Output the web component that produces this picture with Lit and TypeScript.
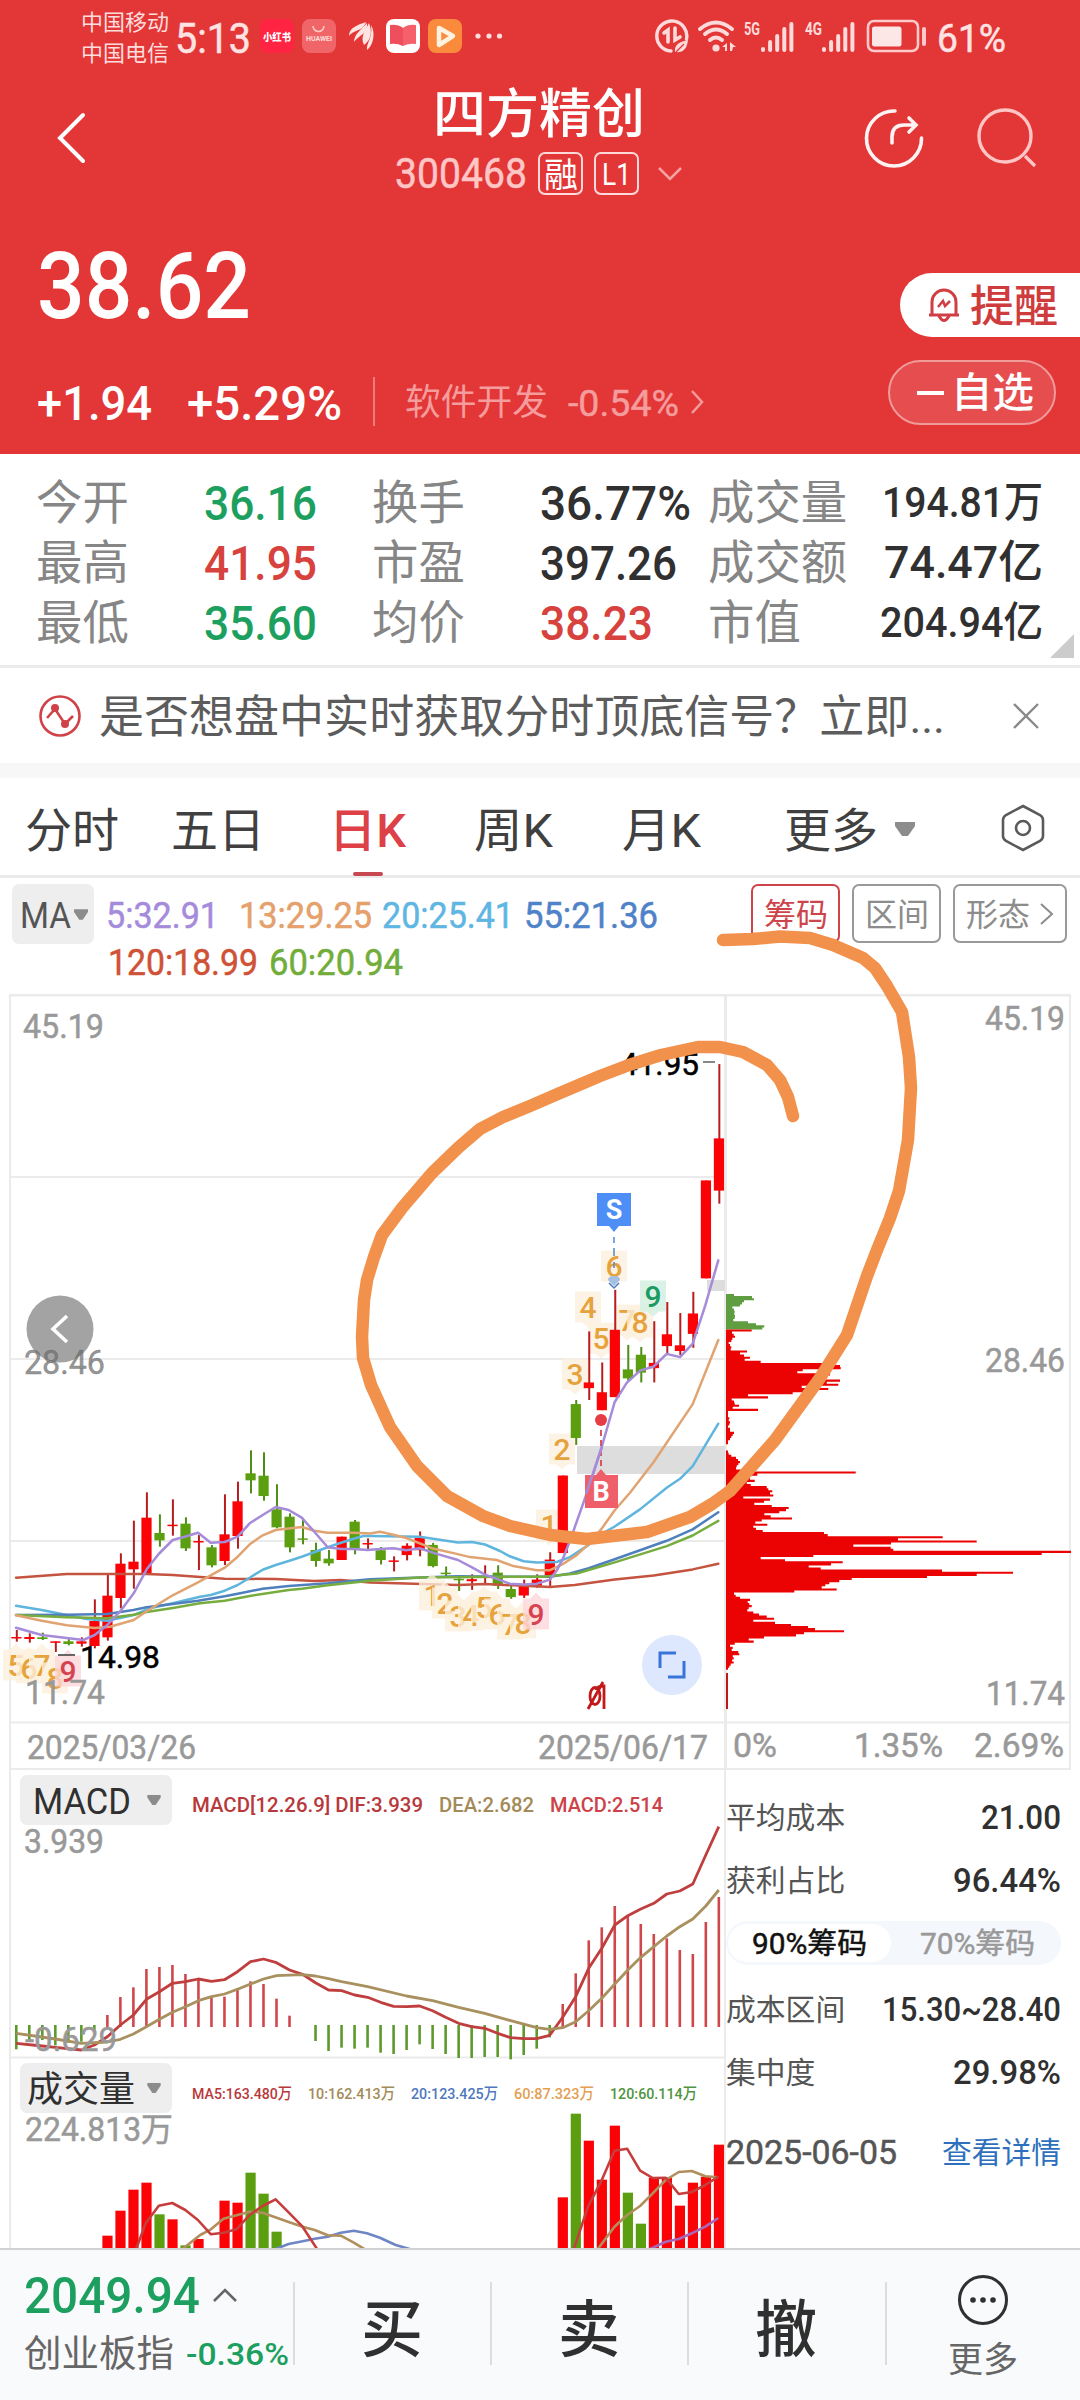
import { LitElement, html, svg, css } from "lit";
import { customElement } from "lit/decorators.js";

type Pt = [number, number];

const RED = "#d7423e";
const GREEN = "#1d9f60";
const DARK = "#303030";
const GREY = "#999";

/** Regular-weight figures get a hairline stroke so they read a touch heavier than the labels. */
const hair = (text: string, weight: number) => (weight === 400 && /^[\d:.,%/+\-]+/.test(text) ? 0.5 : 0);

/** One line of text stretched to a fixed width. */
const t = (text: string, w: number, size: number, fill: string, weight = 500) => {
  const h = Math.round(size * 1.2);
  return html`<svg class="t" width=${w} height=${h} viewBox="0 0 ${w} ${h}">
    <text x="0" y=${h / 2 + size * 0.365} font-size=${size} font-weight=${weight} fill=${fill} stroke=${fill} stroke-width=${hair(text, weight)}
      textLength=${w} lengthAdjust="spacingAndGlyphs">${text}</text></svg>`;
};

/** Text at a baseline on a chart canvas. */
const ct = (text: string, x: number, y: number, w: number, size: number, fill: string, weight = 400) =>
  svg`<text x=${x} y=${y} font-size=${size} font-weight=${weight} fill=${fill} stroke=${fill} stroke-width=${hair(text, weight)} textLength=${w} lengthAdjust="spacingAndGlyphs">${text}</text>`;

const X = (i: number) => 16.3 + 13.01 * i;
const ya = (v: number) => 1300 + v / 3;
const yb = (v: number) => 1100 + v / 2.45;

/* high, body top, body bottom, low, rising */
const early: [number, number, number, number, number][] = [
  [990, 1011, 1015, 1025, 1], [1000, 1011, 1017, 1028, 1], [998, 1012, 1017, 1020, 0], [1024, 1024, 1027, 1056, 1],
  [1015, 1024, 1032, 1036, 0], [1012, 1024, 1031, 1040, 1], [898, 963, 1038, 1045, 1], [825, 887, 1012, 1022, 1],
  [760, 791, 894, 925, 1], [662, 785, 808, 866, 1], [577, 653, 820, 824, 1], [643, 699, 721, 740, 0],
  [598, 674, 677, 707, 1], [652, 671, 745, 753, 0], [705, 723, 727, 810, 1], [735, 742, 796, 802, 0],
  [583, 703, 783, 795, 1], [545, 604, 708, 746, 1], [451, 520, 541, 580, 0], [457, 527, 588, 602, 0],
  [553, 628, 682, 685, 0], [640, 650, 742, 757, 0], [655, 715, 719, 733, 0], [728, 750, 783, 800, 0],
  [750, 776, 790, 797, 0], [710, 710, 780, 780, 1], [660, 665, 745, 763, 0], [715, 729, 732, 753, 1],
];
const late: [number, number, number, number, number][] = [
  [1095, 1103, 1127, 1138, 0], [1118, 1128, 1131, 1155, 1], [1086, 1092, 1115, 1128, 1], [1057, 1073, 1103, 1118, 1],
  [1085, 1090, 1142, 1145, 0], [1143, 1158, 1161, 1168, 0], [1172, 1173, 1176, 1203, 0], [1162, 1174, 1179, 1200, 1],
  [1140, 1166, 1169, 1185, 1], [1140, 1158, 1190, 1198, 0], [1190, 1198, 1218, 1222, 0], [1175, 1190, 1214, 1220, 1],
  [1162, 1175, 1190, 1195, 1], [1108, 1126, 1165, 1195, 1], [920, 920, 1110, 1110, 1], [735, 745, 828, 845, 0],
  [567, 692, 706, 735, 1], [643, 716, 760, 760, 1], [465, 563, 728, 728, 1], [600, 660, 682, 690, 0],
  [605, 624, 668, 692, 0], [542, 644, 657, 692, 1], [495, 574, 603, 625, 1], [522, 601, 615, 625, 1],
  [470, 523, 573, 607, 1], [197, 197, 437, 437, 1], [-88, 94, 222, 254, 1],
];
const candles = [
  ...early.map((c) => [ya(c[0]), ya(c[1]), ya(c[2]), ya(c[3]), c[4]]),
  ...late.map((c) => [yb(c[0]), yb(c[1]), yb(c[2]), yb(c[3]), c[4]]),
];

const join = (a: Pt[], b: Pt[]) =>
  [...a.map(([x, y]) => [x / 3, ya(y)]), ...b.map(([x, y]) => [370 + x / 3, yb(y)])]
    .map(([x, y]) => `${x.toFixed(1)},${y.toFixed(1)}`).join(" ");

const averages = [
  { c: "#c4533f", p: join([[48, 833], [200, 822], [440, 822], [518, 825], [674, 836], [827, 837], [943, 843], [1023, 840]],
    [[0, 1182], [264, 1188], [345, 1186], [540, 1193], [614, 1188], [734, 1175], [851, 1165], [968, 1150], [1045, 1136]]) },
  { c: "#5fb5dd", p: join([[48, 917], [125, 930], [200, 945], [260, 957], [322, 962], [401, 945], [450, 925], [518, 910], [600, 890], [632, 885], [674, 872], [713, 855], [749, 833], [788, 809], [827, 795], [866, 783], [905, 770], [983, 742], [1023, 728], [1061, 716], [1090, 708]],
    [[0, 1068], [149, 1070], [264, 1084], [306, 1083], [345, 1089], [390, 1105], [419, 1118], [461, 1130], [500, 1133], [560, 1132], [600, 1120], [656, 1090], [695, 1063], [734, 1045], [810, 1003], [890, 950], [930, 928], [968, 897], [1045, 793]]) },
  { c: "#4f80bd", p: join([[48, 945], [200, 944], [322, 942], [400, 930], [440, 922], [518, 912], [594, 902], [674, 889], [713, 881], [788, 866], [866, 858], [983, 850]],
    [[0, 1174], [150, 1170], [264, 1167], [400, 1168], [540, 1168], [600, 1160], [656, 1147], [734, 1125], [890, 1080], [968, 1052], [1045, 1010]]) },
  { c: "#77ad3f", p: join([[48, 945], [200, 952], [322, 955], [401, 944], [440, 936], [518, 924], [600, 910], [674, 902], [749, 888], [866, 870], [905, 866], [983, 856]],
    [[0, 1178], [150, 1170], [400, 1168], [520, 1168], [620, 1160], [734, 1133], [890, 1093], [968, 1067], [1045, 1031]]) },
  { c: "#e0a472", p: join([[48, 946], [125, 962], [200, 976], [284, 984], [330, 980], [401, 960], [440, 934], [518, 886], [594, 847], [632, 826], [674, 803], [713, 770], [749, 733], [788, 706], [827, 690], [905, 681], [943, 692], [983, 698], [1061, 698]],
    [[0, 1062], [30, 1058], [70, 1065], [109, 1073], [185, 1098], [260, 1112], [300, 1120], [380, 1127], [430, 1142], [500, 1152], [540, 1152], [578, 1137], [620, 1115], [656, 1088], [695, 1050], [734, 1005], [780, 962], [851, 887], [968, 745], [1045, 588]]) },
  { c: "#a58bd8", p: join([[48, 983], [125, 1005], [250, 1020], [284, 1005], [322, 975], [362, 932], [401, 880], [440, 808], [476, 762], [518, 720], [554, 710], [594, 698], [632, 728], [674, 726], [713, 710], [749, 670], [788, 645], [827, 621], [866, 630], [905, 653], [943, 695], [983, 742], [1023, 747], [1061, 747], [1103, 750]],
    [[29, 1100], [70, 1098], [109, 1103], [149, 1098], [200, 1112], [264, 1127], [306, 1145], [345, 1163], [380, 1173], [419, 1185], [461, 1187], [500, 1185], [540, 1175], [560, 1153], [578, 1125], [600, 1080], [614, 1047], [656, 950], [695, 850], [734, 740], [770, 693], [810, 663], [851, 653], [890, 622], [930, 630], [968, 597], [1006, 503], [1045, 393]]) },
];

/* Nine-turn counters: digit, centre x, centre y, tone */
const counts: [string, number, number, string][] = [
  ["5", 16, 1665, "o"], ["6", 29, 1668, "o"], ["7", 42, 1665, "o"], ["8", 55, 1678, "o"], ["9", 68, 1671, "r"],
  ["1", 432, 1595, "o"], ["2", 445, 1603, "o"], ["3", 458, 1616, "o"], ["4", 471, 1615, "o"], ["5", 484, 1607, "o"],
  ["6", 497, 1614, "o"], ["7", 510, 1624, "o"], ["8", 523, 1623, "o"], ["9", 536, 1614, "r"],
  ["1", 549, 1525, "o"], ["2", 562, 1449, "o"], ["3", 575, 1374, "o"], ["4", 588, 1307, "o"], ["5", 601, 1338, "o"],
  ["6", 614, 1266, "o"], ["7", 627, 1320, "o"], ["8", 640, 1322, "o"], ["9", 653, 1296, "g"],
];
const tones: Record<string, [string, string]> = {
  o: ["#fdf0de", "#e6a23c"], r: ["#fcd6da", "#d64350"], g: ["#d0eedf", "#1b9b62"],
};
const badge = ([d, x, y, k]: [string, number, number, string]) => svg`
  <path d="M${x - 13} ${y - 15.5}h26v31h-26z${y > 1590 ? `M${x - 6} ${y - 15.5}l6 -6 6 6z` : `M${x - 6} ${y + 15.5}l6 5 6 -5z`}" fill=${tones[k][0]} fill-opacity=".78"/>
  <text x=${x} y=${y + 10.5} font-size="30" font-weight="500" text-anchor="middle" fill=${tones[k][1]}>${d}</text>`;

/* Chip distribution: evenly spaced rows from the top, value = bar end */
const chipRows = [42, 96, 102, 72, 66, 60, 37, 42, 44, 43, 45, 44, 40, 84, 108, 133, 127,
  95, 36, 41, 45, 37, 34, 26, 30, 34, 32, 81, 60, 72, 90, 74, 122, 310, 360, 362, 248, 232, 330, 318, 318, 360, 320, 355, 245,
  325, 250, 218, 84, 144, 35, 42, 44, 57, 38, 114, 24, 24, 24, 28, 26, 30, 28, 24, 30, 30, 42, 38, 34, 30, 24, 24, 18, 18,
  18, 24, 26, 34, 48, 54, 60, 55, 50, 48, 66, 407, 112, 80, 90, 104, 80, 92, 140, 145, 157, 150, 160, 70, 150, 132, 103, 155, 206,
  198, 178, 133, 152, 216, 125, 106, 142, 100, 108, 128, 312, 323, 668, 534, 770, 513, 400, 512, 520, 1053, 965, 280, 122,
  195, 368, 333, 266, 302, 666, 879, 770, 621, 395, 358, 328, 316, 305, 350, 223, 42, 47, 60, 90, 83, 88, 95, 86, 82, 100,
  117, 140, 162, 100, 165, 213, 264, 285, 372, 252, 228, 132, 86, 101, 44, 30, 38, 35, 55, 58, 38, 41, 36, 41, 32, 28, 24];
const chipPath = (from: number, to: number) => {
  const y = (k: number) => (1294 + k * 2.088).toFixed(2);
  let d = `M726 ${y(from)}`;
  for (let k = from; k < to; k++) d += `H${(720 + chipRows[k] / 3).toFixed(1)}V${y(k + 1)}`;
  return d + "H726Z";
};

const yc = (v: number) => 1760 + v / 3;
const hist: (number | null)[] = [868, 840, 840, 856, 848, 845, 812, 765, 711, 682, 627, 621, 615, 642, 660, 708, 710, 685, 664, 672, 716, 767, null,
  843, 873, 863, 866, 863, 878, 882, 870, 853, 867, 882, 894, 894, 891, 891, 898, 885, 866, 832, 732, 640, 541, 502, 438, 468, 492, 522, 535, 570, 582, 486, 411];
const byIndex = (p: Pt[]) => p.map(([i, v]) => `${X(i).toFixed(1)},${yc(v).toFixed(1)}`).join(" ");
const byCanvas = (p: Pt[]) => p.map(([x, v]) => `${(x / 2.148).toFixed(1)},${yc(v).toFixed(1)}`).join(" ");
const dif = byIndex([[0, 850], [2, 858], [3, 862], [5, 870], [6, 855], [7, 830], [8, 795], [9, 765], [10, 718], [11, 695], [12, 670], [13, 665], [14, 657], [15, 664], [16, 659], [17, 635], [18, 605], [19, 597], [20, 608], [21, 630], [22, 643], [23, 668], [24, 690], [25, 692], [26, 705], [27, 712], [28, 727], [29, 739], [30, 740], [31, 738], [32, 752], [33, 772], [34, 790], [35, 800], [36, 805], [37, 820], [38, 833], [39, 836], [40, 836], [41, 826], [42, 772], [43, 710], [44, 625], [45, 565], [46, 495], [47, 467], [48, 447], [49, 430], [50, 402], [51, 393], [52, 372], [53, 285], [54, 200]]);
const dea = byIndex([[0, 820], [3, 837], [5, 850], [7, 846], [8, 838], [9, 822], [10, 800], [11, 778], [12, 757], [13, 740], [14, 722], [15, 710], [16, 702], [17, 688], [18, 672], [19, 657], [20, 647], [22, 644], [23, 648], [24, 656], [25, 665], [27, 680], [30, 708], [32, 722], [34, 742], [36, 760], [38, 782], [40, 803], [41, 808], [42, 803], [43, 785], [44, 752], [45, 715], [46, 672], [47, 630], [48, 592], [49, 560], [50, 528], [51, 500], [52, 477], [53, 438], [54, 390]]);

const volumes: [number, number, number][] = [[7, 1427, 1], [8, 1352, 1], [9, 1289, 1], [10, 1268, 1], [11, 1363, 0], [12, 1378, 1], [13, 1456, 0], [14, 1437, 1],
  [16, 1322, 1], [17, 1328, 1], [18, 1238, 0], [19, 1301, 0], [20, 1415, 0], [42, 1312, 1], [43, 1061, 0], [44, 1142, 1], [45, 1259, 1], [46, 1097, 1],
  [47, 1298, 0], [48, 1391, 0], [49, 1253, 1], [50, 1253, 1], [51, 1337, 1], [52, 1268, 1], [53, 1250, 1], [54, 1154, 1]];
const volumeLines = [
  { c: "#6f86c4", p: byCanvas([[592, 1467], [620, 1452], [650, 1444], [676, 1436], [704, 1430], [732, 1418], [760, 1412], [788, 1420], [816, 1433], [850, 1455], [885, 1469]]) },
  { c: "#a868b8", p: byCanvas([[1393, 1469], [1430, 1445], [1458, 1437], [1486, 1420], [1515, 1400], [1543, 1374]]) },
  { c: "#b08f5c", p: byCanvas([[390, 1469], [430, 1425], [453, 1408], [480, 1376], [508, 1366], [536, 1355], [564, 1358], [620, 1386], [650, 1400], [676, 1410], [704, 1426], [732, 1427], [760, 1448], [785, 1469]]) },
  { c: "#b08f5c", p: byCanvas([[1283, 1469], [1320, 1400], [1347, 1365], [1375, 1338], [1402, 1300], [1430, 1260], [1458, 1236], [1486, 1233], [1515, 1249], [1543, 1252]]) },
  { c: "#c53e3c", p: byCanvas([[292, 1469], [313, 1390], [341, 1337], [370, 1329], [398, 1350], [425, 1380], [453, 1423], [480, 1418], [508, 1408], [536, 1365], [564, 1338], [592, 1318], [620, 1357], [650, 1400], [682, 1469]]) },
  { c: "#c53e3c", p: byCanvas([[1232, 1469], [1263, 1340], [1291, 1265], [1320, 1172], [1347, 1166], [1375, 1232], [1402, 1254], [1430, 1253], [1458, 1302], [1486, 1296], [1515, 1275], [1543, 1250]]) },
];

const down = svg`<path d="M0 0h16v3l-6 9h-4l-6-9z" fill="#8c8c8c"/>`;

@customElement("app-root")
export class AppRoot extends LitElement {
  static styles = css`
    :host { display: block; width: 1080px; height: 2400px; overflow: hidden; background: #fff;
      font-family: Roboto, "Noto Sans CJK SC", sans-serif; position: relative; }
    * { box-sizing: border-box; }
    svg { display: block; flex: none; }
    .t { overflow: visible; }
    .row { display: flex; align-items: center; }
    .head { background: #e23637; height: 454px; }
    .status { height: 75px; padding-left: 81px; }
    .carriers { display: flex; flex-direction: column; gap: 5px; margin-right: 6px; padding-bottom: 1px; }
    .status .left { margin-left: 8px; }
    .status .right { margin: 0 9px 0 150px; }
    .title { height: 127px; padding: 0 44px 0 54px; justify-content: space-between; }
    .names { display: flex; flex-direction: column; align-items: center; gap: 2px; padding-left: 126px; padding-top: 3px; }
    .code { gap: 11px; }
    .tag { width: 45px; height: 43px; border: 2px solid #ffd9d9; border-radius: 7px; display: grid; place-items: center; }
    .actions { gap: 51px; }
    .price { height: 150px; justify-content: space-between; align-items: flex-start; padding-left: 37px; }
    .price > .t { margin-top: 26px; }
    .alert { margin-top: 71px; width: 180px; height: 64px; background: #fff; border-radius: 32px 0 0 32px; padding-left: 26px; gap: 8px; }
    .change { height: 102px; align-items: flex-start; padding-left: 37px; }
    .figures { height: 99px; }
    .rule { width: 2px; height: 49px; background: #f07b7b; margin: 0 30px 0 31px; }
    .fav { margin: 8px 0 0 183px; width: 168px; height: 65px; border: 2px solid #f19a9a; background: #e54d4e; border-radius: 33px; gap: 6px; padding-left: 27px; }
    .stats { height: 211px; display: grid; grid-template: repeat(3, 60px) / 168px 168px 168px 168px 335px; padding: 18px 0 0 36px; align-items: center; }
    .stats .last { display: flex; justify-content: space-between; align-items: center; }
    .corner { margin: -31px 6px 0 1050px; }
    .notice { height: 98px; border-top: 3px solid #ebebeb; padding: 0 41px 0 39px; }
    .notice .t { margin: 2px 68px 0 18px; }
    .band { height: 15px; background: #f7f7f8; }
    .tabs { height: 100px; border-bottom: 3px solid #ebebeb; padding: 5px 0 0 25px; }
    .tab { height: 94px; display: flex; flex-direction: column; justify-content: flex-end; align-items: center; }
    .tab .t { margin-bottom: 14px; }
    .tab i { width: 30px; height: 4px; border-radius: 2px; }
    .tab.on i { background: #c9474f; }
    .ma { height: 116px; padding: 6px 0 0 12px; display: flex; align-items: flex-start; }
    .pick { background: #eee; border-radius: 7px; display: flex; align-items: center; }
    .pick.m { width: 82px; height: 60px; padding-left: 8px; gap: 3px; }
    .values { margin: 9px 0 0 12px; width: 645px; display: flex; flex-direction: column; gap: 4px; }
    .values .row { gap: 10px; }
    .values .two { gap: 11px; padding-left: 2px; }
    .chips { gap: 12px; }
    .chip { height: 59px; width: 89px; border: 2px solid #999; border-radius: 7px; display: flex; align-items: center; justify-content: center; gap: 10px; }
    .chip.on { border-color: #cd454b; }
    .chip.wide { width: 114px; }
    .lower { display: grid; grid-template-columns: 726px 335px; height: 478px; }
    .panes { display: grid; grid-template-rows: 286px 192px; }
    .layer { grid-area: 1 / 1 / 3 / 2; }
    .pane1, .pane2 { z-index: 1; display: flex; align-items: flex-start; padding-left: 20px; }
    .pane1 { grid-area: 1 / 1; padding-top: 5px; }
    .pane2 { grid-area: 2 / 1; padding-top: 7px; }
    .pick.p { width: 152px; height: 50px; justify-content: space-between; padding: 0 11px 0 13px; }
    .pick.v { padding-left: 7px; }
    .legend { margin-left: 20px; gap: 16px; height: 60px; }
    .pane1 .legend { height: 59px; }
    .side { display: flex; flex-direction: column; padding-top: 15px; }
    .side .row { height: 63px; justify-content: space-between; }
    .side .switch { height: 44px; margin: 10px 0 12px; background: #f4f7fb; border-radius: 22px; padding-right: 26px; }
    .switch .on { width: 163px; height: 38px; margin-left: 2px; background: #fff; border-radius: 19px; display: grid; place-items: center; }
    .side .date { margin-top: 17px; }
    .foot { height: 152px; border-top: 2px solid #d2d2d4; background: #f9fafc; display: grid; grid-template-columns: 293px 197px 197px 198px 195px; }
    .cell { display: grid; place-items: center; }
    .cell, .foot .more { background: linear-gradient(#dcdde0, #dcdde0) 0 32px / 2px 83px no-repeat; }
    .cell { padding-top: 8px; }
    .index { display: flex; flex-direction: column; padding: 15px 0 0 24px; gap: 6px; }
    .index .row { gap: 12px; }
    .more { display: flex; flex-direction: column; align-items: center; padding-top: 24px; gap: 12px; }
    .ink { position: absolute; left: 0; top: 920px; pointer-events: none; z-index: 3; }
  `;

  private statusBar() {
    const bars = (x: number) => svg`<g stroke="#ffdada" stroke-width="4" stroke-linecap="round">
      ${[4, 11, 17, 24, 29].map((h, i) => svg`<path d="M${x + i * 7.1} 50V${53 - h}"/>`)}</g>`;
    return html`<div class="row status">
      <div class="carriers">${t("中国移动", 88, 22, "#ffdcdc", 400)}${t("中国电信", 88, 22, "#ffdcdc", 400)}</div>
      ${t("5:13", 76, 42, "#ffe2e2", 400)}
      <svg class="left" width="246" height="75" viewBox="259 0 246 75">
        <rect x="260" y="19" width="34" height="34" rx="8" fill="#ff2442"/>
        ${ct("小红书", 263, 41, 28, 10.5, "#fff", 900)}
        <rect x="302" y="19" width="34" height="34" rx="8" fill="#f06568"/>
        <path d="M313 26a5.5 5.5 0 0 0 11 0" fill="none" stroke="#ffc9c6" stroke-width="1.6"/>
        ${ct("HUAWEI", 306, 41, 26, 6.5, "#ffdcd8", 700)}
        <g fill="#ffe4e2"><path d="M349 36c0-8 8-11 17-14-2 7-8 8-12 10-2 1-4 2-5 4z"/><path d="M354 42c0-8 7-12 13-19 1 8-4 11-8 14-2 2-4 3-5 5z"/><path d="M364 45c-4-8 1-14 5-22 3 8 3 16-5 22z"/><path d="M367 50c-1-7 6-12 4-25 5 8 2 21-4 25z"/></g>
        <rect x="386" y="19" width="34" height="34" rx="8" fill="#fff"/>
        <path d="M390 25q8-1 13 3v18q-6-3-13-2z" fill="#ef4f5c"/><path d="M416 25q-8-1-13 3v18q6-3 13-2z" fill="#f5606b"/>
        <rect x="428" y="19" width="34" height="34" rx="8" fill="#fa8a3c"/>
        <path d="M439 28l14 8-14 9z" fill="none" stroke="#fff3df" stroke-width="4.500" stroke-linejoin="round"/>
        <g fill="#ffdede"><circle cx="478" cy="36" r="2.600"/><circle cx="489" cy="36" r="2.600"/><circle cx="499.500" cy="36" r="2.600"/></g>
      </svg>
      <svg class="right" width="273" height="75" viewBox="655 0 273 75">
        <g fill="none" stroke="#ffdada" stroke-width="3.400" stroke-linecap="round">
          <path d="M671 51a15 15 0 1 1 15.500-12"/>
          <path d="M664 33l4-3v12M675 28v12l5-3" stroke-width="3.600"/>
          <path d="M700 29q16-13 32 0M705 34q11-9 22 0M710 40q6-5 12 0" stroke-width="4"/>
        </g>
        <path d="M675 52c-1-8 5-10 13-12-1 9-5 13-13 12z" fill="#ffdada"/><path d="M676 52l8-8" stroke="#e23637" stroke-width="1.300"/>
        <circle cx="716" cy="48" r="3.600" fill="#ffdada"/>
        <path d="M722 47l5-4v8h-2v-4zM730 42l6 5h-3l-1 4h-2z" fill="#ffdada"/>
        ${ct("5G", 744, 35, 16, 19, "#ffdada", 700)}${bars(763)}
        ${ct("4G", 805, 35, 17, 19, "#ffdada", 700)}${bars(824)}
        <rect x="868" y="21" width="50" height="30" rx="6" fill="none" stroke="#ffc9c9" stroke-width="2.600"/>
        <rect x="872" y="26.500" width="29.500" height="20" rx="2.500" fill="#fde6e6"/>
        <path d="M924 29v15" stroke="#ffc9c9" stroke-width="4" stroke-linecap="round"/>
      </svg>
      ${t("61%", 69, 38, "#ffe2e2", 400)}
    </div>`;
  }

  private header() {
    return html`<div class="head">
      ${this.statusBar()}
      <div class="row title">
        <svg width="34" height="54" viewBox="0 0 34 54"><path d="M29 3L6 26l23 23" fill="none" stroke="#fff" stroke-width="4" stroke-linecap="round"/></svg>
        <div class="names">
          ${t("四方精创", 212, 53, "#fff", 500)}
          <div class="row code">
            ${t("300468", 132, 42, "#ffc6c6", 400)}
            <div class="tag">${t("融", 34, 34, "#fff", 400)}</div>
            <div class="tag">${t("L1", 29, 31, "#fff", 400)}</div>
            <svg width="32" height="20" viewBox="0 0 32 20"><path d="M9 5l11 11L31 5" fill="none" stroke="#f5a3a3" stroke-width="2.500"/></svg>
          </div>
        </div>
        <div class="row actions">
          <svg width="62" height="62" viewBox="0 1 62 62" fill="none" stroke="#fff2f2" stroke-width="3.600" stroke-linecap="round">
            <path d="M32 4A27.500 27.500 0 1 0 58.500 31M29 36v-6q0-12 12-12h11M46 11l7 7-7 7"/></svg>
          <svg width="60" height="62" viewBox="0 0 60 62" fill="none" stroke="#ffc4c4" stroke-width="3.400"><circle cx="29" cy="28" r="26"/><path d="M49 48l10 10"/></svg>
        </div>
      </div>
      <div class="row price">
        ${t("38.62", 214, 93, "#fff", 500)}
        <div class="row alert">
          <svg width="36" height="38" viewBox="0 0 36 38" fill="none" stroke="#cf3f43" stroke-width="3"><path d="M3 29h30M6 29V16a12 12 0 0 1 24 0v13M13 30q5 9 10 0"/><path d="M12 21l5-6 2 5 5-5" stroke-width="2.500"/></svg>
          ${t("提醒", 88, 44, "#cf3c3e", 500)}
        </div>
      </div>
      <div class="row change">
        <div class="row figures">
          ${t("+1.94", 115, 48, "#fff", 500)}<span style="width:35px"></span>${t("+5.29%", 155, 48, "#fff", 500)}
          <div class="rule"></div>
          ${t("软件开发", 143, 36, "#f59c9c", 400)}<span style="width:20px"></span>${t("-0.54%", 111, 37, "#f59c9c", 400)}
          <svg width="26" height="30" viewBox="0 0 26 30"><path d="M13 4l10 11-10 11" fill="none" stroke="#f59c9c" stroke-width="2.500"/></svg>
        </div>
        <div class="row fav"><svg width="28" height="6" viewBox="0 0 28 6"><path d="M0 3h27" stroke="#fff" stroke-width="4"/></svg>${t("自选", 83, 41, "#fff", 500)}</div>
      </div>
    </div>`;
  }

  private stats() {
    const L = (s: string) => t(s, s.length * 46.4, 46.4, "#868686", 400);
    const V = (s: string, w: number, c: string) => t(s, w, 48, c, 500);
    return html`<div class="stats">
      ${L("今开")}${V("36.16", 113, GREEN)}${L("换手")}${V("36.77%", 151, DARK)}<div class="last">${L("成交量")}${t("194.81万", 161, 42, DARK)}</div>
      ${L("最高")}${V("41.95", 113, RED)}${L("市盈")}${V("397.26", 137, DARK)}<div class="last">${L("成交额")}${t("74.47亿", 159, 45, DARK)}</div>
      ${L("最低")}${V("35.60", 113, GREEN)}${L("均价")}${V("38.23", 113, RED)}<div class="last">${L("市值")}${t("204.94亿", 163, 42, DARK)}</div>
    </div>
    <svg class="corner" width="24" height="31" viewBox="0 0 24 31"><path d="M24 0v24H0z" fill="#ccc"/></svg>
    <div class="row notice">
      <svg width="42" height="42" viewBox="0 0 42 42" fill="none" stroke="#cf4248" stroke-width="2.600"><circle cx="21" cy="21" r="19.500"/><path d="M8 23l8-9 10 15 8-8"/><g fill="#cf4248" stroke="none"><circle cx="16" cy="13" r="4"/><circle cx="26" cy="29" r="4"/></g></svg>
      ${t("是否想盘中实时获取分时顶底信号？立即...", 846, 45, "#5c5c5c", 400)}
      <svg width="26" height="26" viewBox="0 0 26 26"><path d="M1 1l24 24M25 1L1 25" stroke="#8a8a8a" stroke-width="2.400"/></svg>
    </div>
    <div class="band"></div>`;
  }

  private tabs() {
    const tab = (s: string, w: number, gap: number, on = false) =>
      html`<div class="tab ${on ? "on" : ""}">${t(s, w, 47, on ? "#de4047" : "#404040", on ? 500 : 400)}<i></i></div><span style="width:${gap}px"></span>`;
    return html`<div class="row tabs">
      ${tab("分时", 94, 52)}${tab("五日", 94, 64)}${tab("日K", 77, 68, true)}${tab("周K", 79, 69)}${tab("月K", 79, 83)}${tab("更多", 94, 17)}
      <svg width="20" height="14" viewBox="0 0 20 14"><path d="M0 0h20v4l-7 10H7L0 4z" fill="#8c8c8c"/></svg>
      <span style="width:86px"></span>
      <svg width="44" height="50" viewBox="0 0 44 50" fill="none" stroke="#5a5a5a" stroke-width="2.600"><path d="M22 2l17 9q3 2 3 5v16q0 3-3 5l-17 9-17-9q-3-2-3-5V16q0-3 3-5z"/><circle cx="22" cy="24" r="7"/></svg>
    </div>`;
  }

  private averagesRow() {
    return html`<div class="ma">
      <div class="pick m">${t("MA", 51, 36, "#555", 400)}<svg width="14" height="11" viewBox="0 0 16 12">${down}</svg></div>
      <div class="values">
        <div class="row">${t("5:32.91", 113, 36, "#a58bdb", 400)}<span></span>${t("13:29.25", 133, 36, "#e5a06c", 400)}${t("20:25.41", 132, 36, "#5fb6e3", 400)}${t("55:21.36", 134, 36, "#4f82c8", 400)}</div>
        <div class="row two">${t("120:18.99", 150, 36, "#cf5236", 400)}${t("60:20.94", 134, 36, "#72ad3b", 400)}</div>
      </div>
      <div class="row chips">
        <div class="chip on">${t("筹码", 64, 32, "#cd454b", 400)}</div>
        <div class="chip">${t("区间", 64, 32, "#8c8c8c", 400)}</div>
        <div class="chip wide">${t("形态", 64, 32, "#8c8c8c", 400)}<svg width="14" height="24" viewBox="0 0 14 24"><path d="M1 2l11 10L1 22" fill="none" stroke="#8c8c8c" stroke-width="2"/></svg></div>
      </div>
    </div>`;
  }

  private kline() {
    return html`<svg width="1080" height="776" viewBox="0 994 1080 776">
      <g stroke="#ebebeb" stroke-width="2" fill="none">
        <path d="M9 995H1071" stroke-width="3"/><path d="M10 994V1770M1070 994V1770M10 1177H724M10 1359H724M10 1541H724M10 1722.500H1070"/>
        <path d="M725.500 994V1770" stroke-width="3"/><path d="M10 1769H1070"/></g>
      <g fill="#ddd"><rect x="577" y="1446" width="148" height="28"/><rect x="707" y="1280" width="18" height="11"/></g>
      ${counts.filter((c) => c[2] < 1590).map(badge)}
      ${candles.map(([h, a, b, l, up], i) => svg`<path d="M${X(i) + 0.5} ${h}V${l}" stroke=${up ? "#b81c1c" : "#4f8c18"} stroke-width="2"/>
        <rect x=${X(i) - 5} y=${a} width="10.200" height=${Math.max(b - a, 1.5)} fill=${up ? "#fb0207" : "#5b9f10"}/>`)}
      ${averages.map((m) => svg`<polyline points=${m.p} fill="none" stroke=${m.c} stroke-width="2.500" stroke-linejoin="round" stroke-linecap="round"/>`)}
      ${counts.filter((c) => c[2] >= 1590).map(badge)}
      <path d="M614 1237v6M614 1248v8M614 1262v6" stroke="#5b8fce" stroke-width="1.600"/>
      <path d="M608 1280q0-4 6-4t6 4l-6 6z" fill="#a4bfe4"/><path d="M609 1283l5 5 5-5" fill="none" stroke="#4c7cc0" stroke-width="1.500"/>
      <path d="M597 1193h34v33h-12l-5 6-5-6h-12z" fill="#4d8ff7"/>
      <text x="614" y="1219" font-size="27" font-weight="700" text-anchor="middle" fill="#fff">S</text>
      <circle cx="601" cy="1420" r="6" fill="#e63c46"/><path d="M601 1430V1470" stroke="#d8464e" stroke-width="1.800" stroke-dasharray="6 4"/>
      <path d="M585 1475h11l5-6 5 6h12v33h-33z" fill="#ef5f6a"/>
      <path d="M586 1494L602 1447" stroke="#a58bd8" stroke-width="2.500"/>
      <text x="601" y="1501" font-size="27" font-weight="700" text-anchor="middle" fill="#fff">B</text>
      <path d=${chipPath(0, 17)} fill="#5f9e40"/><path d=${chipPath(17, chipRows.length)} fill="#eb0202"/>
      <path d="M727 1673V1709" stroke="#c01818" stroke-width="2"/>
      <circle cx="60" cy="1329" r="33.500" fill="#a3a3a3"/><path d="M67 1316l-14 13 14 13" fill="none" stroke="#fff" stroke-width="3.600"/>
      ${ct("45.19", 23, 1038, 81, 33, GREY)}${ct("28.46", 24, 1373.5, 81, 33, "rgba(110,110,110,.72)")}${ct("11.74", 25, 1704, 80, 33, GREY)}
      ${ct("14.98", 80, 1668, 80, 31, "#000")}<path d="M58 1655h17" stroke="#666" stroke-width="2"/>
      ${ct("41.95", 620, 1075, 79, 31, "#000")}<path d="M703 1062h12" stroke="#888" stroke-width="2"/>
      ${ct("2025/03/26", 27, 1759, 169, 33, GREY)}${ct("2025/06/17", 538, 1759, 170, 33, GREY)}
      ${ct("45.19", 985, 1029.5, 80, 33, GREY)}${ct("28.46", 985, 1372, 80, 33, GREY)}${ct("11.74", 986, 1705, 79, 33, GREY)}
      ${ct("0%", 733, 1757, 44, 33, GREY)}${ct("1.35%", 854, 1757, 89, 33, GREY)}${ct("2.69%", 974, 1757, 90, 33, GREY)}
      <circle cx="672" cy="1665" r="30" fill="#dde8fe"/>
      <path d="M660 1668v-15h16M668 1677h16v-16" fill="none" stroke="#3b74d8" stroke-width="3"/>
      <g fill="none" stroke="#c21a1a" stroke-width="2.800"><ellipse cx="595" cy="1696" rx="5" ry="8.500"/><path d="M588 1709l15-27M596 1690q1-4 8-4v23"/></g>
    </svg>`;
  }

  private lower() {
    const kv = (k: string, v: string, w: number) => html`<div class="row">${t(k, k.length * 29.8, 29.8, "#555", 400)}${t(v, w, 33.5, DARK, 500)}</div>`;
    return html`<div class="lower">
      <div class="panes">
        <svg class="layer" width="726" height="478" viewBox="0 1770 726 478">
          <path d="M10 1770V2248M725 1770V2248M10 2057.500H725" stroke="#ebebeb" stroke-width="2" fill="none"/>
          ${hist.map((v, i) => v === null ? "" : svg`<path d="M${X(i)} ${v < 800 ? 2027 : 2025}V${yc(v)}" stroke=${v < 800 ? "#d0474b" : "#5c9a2c"} stroke-width="2.600"/>`)}
          <polyline points=${dif} fill="none" stroke="#bf3e3e" stroke-width="2.800" stroke-linejoin="round"/>
          <polyline points=${dea} fill="none" stroke="#a8905f" stroke-width="2.800" stroke-linejoin="round"/>
          ${ct("3.939", 24, 1853, 80, 33, GREY)}${ct("-0.629", 25, 2051, 92, 33, GREY)}${ct("224.813万", 25, 2140.5, 148, 33, GREY)}
          ${volumes.map(([i, v, up]) => svg`<rect x=${X(i) - 5} y=${yc(v)} width="10.200" height=${2250 - yc(v)} fill=${up ? "#fb0207" : "#5b9f10"}/>`)}
          ${volumeLines.map((m) => svg`<polyline points=${m.p} fill="none" stroke=${m.c} stroke-width="2.600" stroke-linejoin="round"/>`)}
        </svg>
        <div class="pane1">
          <div class="pick p">${t("MACD", 98, 36, DARK, 400)}<svg width="14" height="10" viewBox="0 0 16 12">${down}</svg></div>
          <div class="row legend">${t("MACD[12.26.9] DIF:3.939", 231, 21, "#b8393c")}${t("DEA:2.682", 95, 21, "#a38a58")}${t("MACD:2.514", 113, 21, "#cd4248")}</div>
        </div>
        <div class="pane2">
          <div class="pick p v">${t("成交量", 108, 36, DARK, 400)}<svg width="14" height="10" viewBox="0 0 16 12">${down}</svg></div>
          <div class="row legend">${t("MA5:163.480万", 100, 15.5, "#b8393c")}${t("10:162.413万", 87, 15.5, "#a38a58")}${t("20:123.425万", 87, 15.5, "#4f78c0")}${t("60:87.323万", 80, 15.5, "#e2a052")}${t("120:60.114万", 87, 15.5, "#4f9440")}</div>
        </div>
      </div>
      <div class="side">
        ${kv("平均成本", "21.00", 80)}${kv("获利占比", "96.44%", 108)}
        <div class="row switch"><div class="on">${t("90%筹码", 115, 29, "#111", 400)}</div>${t("70%筹码", 115, 29, GREY, 400)}</div>
        ${kv("成本区间", "15.30~28.40", 179)}${kv("集中度", "29.98%", 108)}
        <div class="row date">${t("2025-06-05", 171, 33, "#555", 400)}${t("查看详情", 119, 29.8, "#2e70bd", 400)}</div>
      </div>
    </div>`;
  }

  private footer() {
    const cell = (s: string) => html`<div class="cell">${t(s, 62, 62, DARK, 500)}</div>`;
    return html`<div class="foot">
      <div class="index">
        <div class="row">${t("2049.94", 176, 50, GREEN)}<svg width="26" height="16" viewBox="0 0 26 16"><path d="M2 14L13 3l11 11" fill="none" stroke="#666" stroke-width="2.600"/></svg></div>
        <div class="row">${t("创业板指", 150, 37, "#666", 400)}${t("-0.36%", 103, 32, GREEN)}</div>
      </div>
      ${cell("买")}${cell("卖")}${cell("撤")}
      <div class="more">
        <svg width="52" height="52" viewBox="0 0 52 52"><circle cx="26" cy="26" r="23.500" fill="none" stroke="#303030" stroke-width="3"/><g fill="#303030"><circle cx="16" cy="26" r="2.800"/><circle cx="26" cy="26" r="2.800"/><circle cx="36" cy="26" r="2.800"/></g></svg>
        ${t("更多", 70, 35, "#666", 400)}
      </div>
    </div>`;
  }

  render() {
    return html`${this.header()}${this.stats()}${this.tabs()}${this.averagesRow()}${this.kline()}${this.lower()}${this.footer()}
      <svg class="ink" width="1080" height="640" viewBox="0 920 1080 640">
        <polyline fill="none" stroke="#f2914b" stroke-width="12.500" stroke-linecap="round" stroke-linejoin="round"
          points="723,940 753,939 780,936.500 810,938 833,945 863,958 875,968 887,986 902,1012 909,1057 911,1088 908,1140 899,1191 890,1218 877,1250 867,1276 847,1335 820,1378 775,1440 730,1491 712,1504 690,1517 647,1532 587,1539 550,1535 510,1526 483,1516 447,1496 417,1466 390,1427 371,1385 363,1358 362,1337 364,1300 367,1280 374,1257 382,1235 402,1208 432,1173 459,1147 480,1129 503,1117 530,1106 560,1093 600,1076 629,1065 661,1055 698,1047 720,1047 743,1052 767,1065 780,1080 788,1097 793,1116"/>
      </svg>`;
  }
}
